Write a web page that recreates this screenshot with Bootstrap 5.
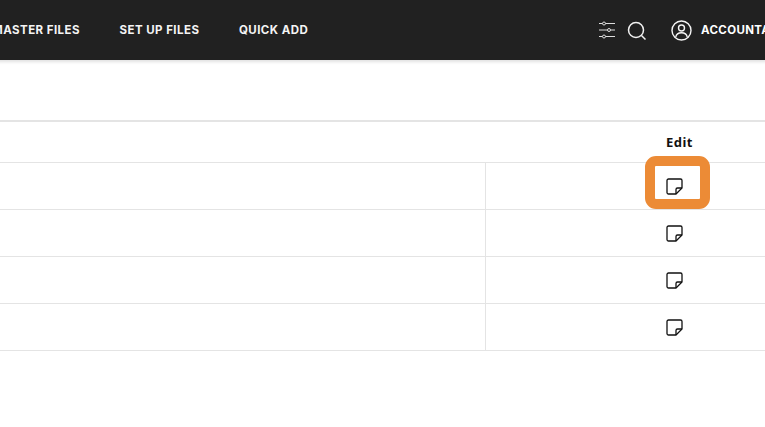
<!DOCTYPE html>
<html lang="en">
<head>
    <meta charset="UTF-8">
    <meta name="viewport" content="width=device-width, initial-scale=1.0">
    <title>Accounts</title>
    <link href="https://cdn.jsdelivr.net/npm/bootstrap@5.3.2/dist/css/bootstrap.min.css" rel="stylesheet">
    <style>
        html, body { overflow: hidden; height: 427px; background: #fff; }
        .top-bar { height: 60px; background: #212121; box-shadow: 0 2px 3px rgba(0,0,0,.12); width: 806px; margin-left: -8px; flex-wrap: nowrap; }
        .top-link { font: 700 11.5px Inter, "Liberation Sans", sans-serif; color: #f4f4f4; text-decoration: none; letter-spacing: .45px; white-space: nowrap; margin-right: 39.500px; }
        .top-tools { width: 200px; margin-left: auto; flex-shrink: 0; }
        .search-icon { margin-left: 11px; }
        .user-icon { margin-left: 24px; }
        .top-account { font: 700 11.5px Inter, "Liberation Sans", sans-serif; color: #fff; white-space: nowrap; letter-spacing: .35px; margin-left: 9px; }
        .sheet { width: 874px; table-layout: fixed; margin: 60px 0 0; border-top: 2px solid #e4e4e4; }
        .sheet th { height: 41px; padding: 0; border-bottom: 1px solid #e4e4e4; font: 700 13px "Noto Sans", "Open Sans", sans-serif; letter-spacing: .5px; color: #111; text-align: center; vertical-align: middle; }
        .sheet td { height: 47px; padding: 0; border-bottom: 1px solid #e4e4e4; vertical-align: middle; }
        .sheet .first-col { width: 485px; }
        .sheet td.first-col { border-right: 1px solid #e4e4e4; }
        .note-icon { display: block; position: relative; top: .5px; }
        .edit-cell { position: relative; width: 27px; margin: 0 auto; }
        .edit-mark { position: absolute; left: -21px; top: -21px; width: 65px; height: 53px; border: 10px solid #ec8b36; border-radius: 11px; }
    </style>
</head>
<body>
    <nav class="top-bar d-flex align-items-center">
        <a class="top-link" href="#">MASTER FILES</a>
        <a class="top-link" href="#">SET UP FILES</a>
        <a class="top-link" href="#">QUICK ADD</a>
        <div class="top-tools d-flex align-items-center">
            <svg width="18" height="18" viewBox="0 0 18 18" fill="none" stroke="#ddd" stroke-width="1">
                <path d="M1 2.500h3.500M7.500 2.500H17M1 9h8.500M12.500 9H17M1 15.500h3.500M7.500 15.500H17"/>
                <circle cx="6" cy="2.500" r="1.500"/><circle cx="11" cy="9" r="1.500"/><circle cx="6" cy="15.500" r="1.500"/>
            </svg>
            <svg class="search-icon" width="20" height="20" viewBox="0 0 20 20" fill="none" stroke="#f2f2f2" stroke-width="1.500">
                <circle cx="9" cy="10" r="7.500"/><path d="M14.500 15.500l4 4"/>
            </svg>
            <svg class="user-icon" width="21" height="21" viewBox="0 0 21 21" fill="none" stroke="#f5f5f5" stroke-width="1.400">
                <circle cx="10.500" cy="10.500" r="9.500"/><circle cx="10.500" cy="8" r="3"/><path d="M4.800 17c.5-3 2.500-4.200 5.700-4.200s5.200 1.200 5.700 4.200"/>
            </svg>
            <span class="top-account">ACCOUNTANT</span>
        </div>
    </nav>

    <table class="sheet">
        <thead>
            <tr><th class="first-col"></th><th>Edit</th></tr>
        </thead>
        <tbody id="sheetBody"></tbody>
    </table>

    <script src="https://cdn.jsdelivr.net/npm/bootstrap@5.3.2/dist/js/bootstrap.bundle.min.js"></script>
    <script>
        const icon = '<svg class="note-icon" width="17" height="17" viewBox="0.5 0 17 17" fill="none" stroke="#111" stroke-width="1.300" stroke-linejoin="round"><path d="M3 1h12a1.500 1.500 0 0 1 1.500 1.500V10L10.500 16H3a1.500 1.500 0 0 1-1.500-1.500v-12A1.500 1.500 0 0 1 3 1z"/><path d="M16.500 10h-4.500a1.500 1.500 0 0 0-1.500 1.500V16"/></svg>';
        const body = document.getElementById('sheetBody');
        for (let i = 0; i < 4; i++) {
            const row = document.createElement('tr');
            const mark = i === 0 ? '<div class="edit-mark"></div>' : '';
            row.innerHTML = `<td class="first-col"></td><td><div class="edit-cell">${icon}${mark}</div></td>`;
            body.appendChild(row);
        }
    </script>
</body>
</html>
